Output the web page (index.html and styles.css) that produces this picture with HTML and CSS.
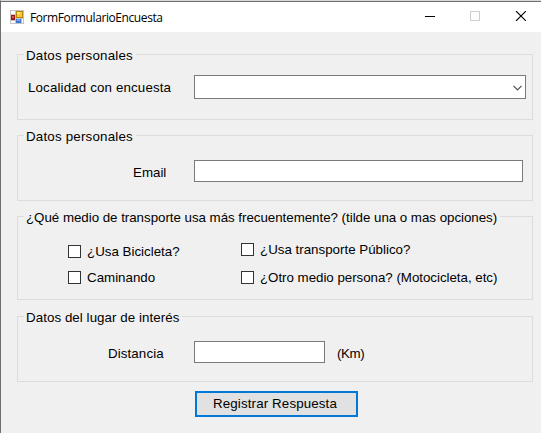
FILE: index.html
```html
<!DOCTYPE html>
<html lang="es">
<head>
<meta charset="utf-8">
<title>FormFormularioEncuesta</title>
<link rel="stylesheet" href="styles.css">
</head>
<body>
<div class="window">
  <header class="titlebar">
    <svg class="app-icon" width="14" height="14" viewBox="0 0 14 14" shape-rendering="crispEdges">
      <path fill="#c3c3c3" d="M0 0h14v14H0z"/>
      <path fill="#fff" d="M1 1h4v3H1zM1 11h4v2H1zM12 9h1v4h-1z"/>
      <path fill="#a01818" d="M1 5h4v5H1z"/>
      <path fill="#d8574c" d="M2 6h2v2H2z"/>
      <path fill="#b8860b" d="M6 1h7v7H6z"/>
      <path fill="#f8c933" d="M7 2h5v5H7z"/>
      <path fill="#ffe88a" d="M7 2h3v2H7z"/>
      <path fill="#3c78d2" d="M6 9h5v4H6z"/>
      <path fill="#78aaf0" d="M7 9h3v2H7z"/>
    </svg>
    <span class="title">FormFormularioEncuesta</span>
    <svg class="controls" width="101" height="10" viewBox="0 0 101 10">
      <path fill="#000" d="M0 5h10v1H0z"/>
      <path fill="none" stroke="#ccc" d="M45.5.5h9v9h-9z"/>
      <path fill="none" stroke="#000" stroke-width="1.1" d="M91 0l10 10M101 0L91 10"/>
    </svg>
  </header>
  <main class="form">
    <section class="group">
      <h2 class="legend personal">Datos personales</h2>
      <div class="row combo-row">
        <label class="label t-localidad">Localidad con encuesta</label>
        <div class="field combo">
          <svg width="9" height="6" viewBox="0 0 9 6"><path fill="none" stroke="#505050" stroke-width="1.2" d="M.5.8l4 4 4-4"/></svg>
        </div>
      </div>
    </section>
    <section class="group">
      <h2 class="legend personal">Datos personales</h2>
      <div class="row email-row">
        <label class="label">Email</label>
        <div class="field email"></div>
      </div>
    </section>
    <section class="group tall">
      <h2 class="legend transporte">¿Qué medio de transporte usa más frecuentemente? (tilde una o mas opciones)</h2>
      <div class="options">
        <div class="column first">
          <label class="option"><i class="box"></i><span>¿Usa Bicicleta?</span></label>
          <label class="option"><i class="box"></i><span>Caminando</span></label>
        </div>
        <div class="column second">
          <label class="option"><i class="box"></i><span>¿Usa transporte Público?</span></label>
          <label class="option"><i class="box"></i><span class="t-otro">¿Otro medio persona? (Motocicleta, etc)</span></label>
        </div>
      </div>
    </section>
    <section class="group">
      <h2 class="legend lugar">Datos del lugar de interés</h2>
      <div class="row distance-row">
        <label class="label t-dist">Distancia</label>
        <div class="field distance"></div>
        <span class="unit">(Km)</span>
      </div>
    </section>
    <button class="submit">Registrar Respuesta</button>
  </main>
</div>
</body>
</html>
```
FILE: styles.css
```css
* { box-sizing: border-box; }
body {
  margin: 0;
  font: 13.33px/16px "Liberation Sans", sans-serif;
  color: #000;
  background: #f0f0f0;
}
.window {
  height: 433px;
  overflow: hidden;
  border-left: 1px solid #6f6f6f;
  border-top: 1px solid #dadada;
  background: #f0f0f0;
}
.titlebar {
  display: flex;
  height: 31px;
  padding: 8px 15px 0 9px;
  border-top: 1px solid #6f6f6f;
  background: #fff;
}
.title {
  margin-left: 6px;
  font: 12px/16px "Open Sans", sans-serif;
  letter-spacing: -.41px;
  white-space: nowrap;
}
.controls { margin: 1px 0 0 auto; }
.form { padding: 22px 8px 0 16px; }
.group {
  height: 66px;
  margin-bottom: 15px;
  border: 1px solid #dcdcdc;
}
.group.tall { height: 84px; margin-bottom: 17px; }
.group:last-of-type { margin-bottom: 9px; }
.group.tall { margin-bottom: 16px; }
.legend {
  width: fit-content;
  margin: -7px 0 0 6px;
  padding: 0 3px 0 2px;
  font-size: inherit;
  font-weight: normal;
  background: #f0f0f0;
  white-space: nowrap;
}
.row { display: flex; }
.label, .unit { margin-top: 5px; white-space: nowrap; }
.field { border: 1px solid #7a7a7a; background: #fff; }
.combo-row { padding: 11px 0 0 10px; }
.email-row { padding: 15px 0 0 115px; }
.distance-row { padding: 15px 0 0 90px; }
.combo-row .label { width: 166px; }
.email-row .label { width: 61px; }
.distance-row .label { width: 86px; }
.combo {
  display: flex;
  justify-content: flex-end;
  width: 332px;
  height: 24px;
  padding: 9px 3px 0 0;
}
.email { width: 329px; height: 22px; }
.distance { width: 131px; height: 22px; }
.unit { margin-left: 12px; letter-spacing: -.4px; }
.options { display: flex; padding-left: 50px; }
.column { display: flex; flex-direction: column; width: 173px; }
.first { padding-top: 18px; gap: 10px; }
.second { padding-top: 16px; gap: 12px; }
.option { display: flex; height: 16px; gap: 6px; white-space: nowrap; }
.box {
  flex: none;
  width: 13px;
  height: 13px;
  margin-top: 1px;
  border: 1px solid #333;
  background: #fff;
}
.submit {
  display: block;
  width: 163px;
  height: 26px;
  margin-left: 178px;
  padding: 0 3px 0 0;
  border: 2px solid #0078d7;
  border-radius: 0;
  background: #e1e1e1;
  font: inherit;
  letter-spacing: .13px;
  color: #000;
}
.personal { letter-spacing: .02px; }
.personal { letter-spacing: .2px; }
.t-localidad { letter-spacing: .14px; }
.transporte { letter-spacing: -.03px; }
.t-otro { letter-spacing: -.03px; }
.lugar { letter-spacing: .06px; }
.t-dist { letter-spacing: .1px; }
```
